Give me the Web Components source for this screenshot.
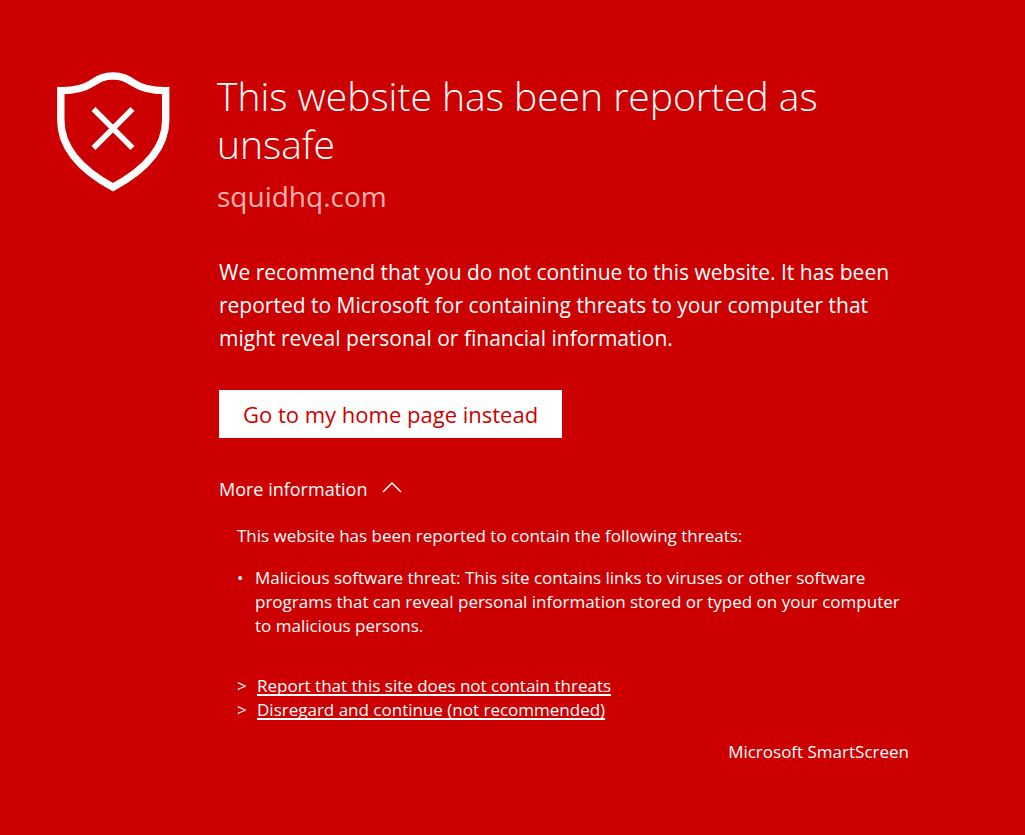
<!DOCTYPE html>
<html lang="en">
<head>
<meta charset="utf-8">
<meta name="viewport" content="width=device-width, initial-scale=1">
<title>Unsafe website</title>
<style>
  body { margin: 0; min-height: 100vh; background: #cc0000; color: #fff; font-family: "Open Sans", "Noto Sans", sans-serif; }
</style>
</head>
<body>
<warning-page>
  <shield-icon slot="icon"></shield-icon>
  <warning-heading slot="heading">This website has been reported as unsafe<span slot="site">squidhq.com</span></warning-heading>
  <span slot="advice">We recommend that you do not continue to this website. It has been reported to Microsoft for containing threats to your computer that might reveal personal or financial information.</span>
  <home-button slot="action">Go to my home page instead</home-button>
  <more-information slot="details">
    <span slot="intro">This website has been reported to contain the following threats:</span>
    <span slot="threat">Malicious software threat: This site contains links to viruses or other software programs that can reveal personal information stored or typed on your computer to malicious persons.</span>
    <action-link slot="links" href="#report">Report that this site does not contain threats</action-link>
    <action-link slot="links" href="#continue">Disregard and continue (not recommended)</action-link>
  </more-information>
  <span slot="brand">Microsoft SmartScreen</span>
</warning-page>
<script>
const define = (name, html, setup) => customElements.define(name, class extends HTMLElement {
  constructor() {
    super();
    const template = document.createElement('template');
    template.innerHTML = html;
    this.attachShadow({ mode: 'open' }).append(template.content.cloneNode(true));
    if (setup) setup(this, this.shadowRoot);
  }
});

define('warning-page', `
<style>
  :host { display: block; padding: 72px 56px; }
  main { display: grid; grid-template-columns: 114px minmax(0, 692px); column-gap: 47px; }
  .body { padding-left: 2px; }
  .advice { margin: 40px 0 35px; font-size: 21px; line-height: 33px; }
  footer { margin-top: 18px; text-align: right; font-size: 17px; line-height: 24px; }
</style>
<main>
  <slot name="icon"></slot>
  <div>
    <slot name="heading"></slot>
    <div class="body">
      <p class="advice"><slot name="advice"></slot></p>
      <slot name="action"></slot>
      <slot name="details"></slot>
      <footer><slot name="brand"></slot></footer>
    </div>
  </div>
</main>`);

define('shield-icon', `
<style>
  :host { display: block; }
  svg { display: block; width: 100%; height: auto; }
</style>
<svg viewBox="0 0 114 120" fill="none" stroke="#fff" aria-hidden="true">
  <path stroke-width="7.4" d="M4.800 18.600C17 18.800 27 17 35.500 11.500C44 6 48 4 57 4C66 4 70 6 78.500 11.500C87 17 97 18.800 109.700 18.600V48C109.700 78 87 99 57 115.200C27 99 4.800 78 4.800 48Z"/>
  <path stroke-width="5.500" d="M37.500 37L76.500 76M76.500 37L37.500 76"/>
</svg>`);

define('warning-heading', `
<style>
  :host { display: block; }
  h1 { margin: 0; font-size: 39px; font-weight: 300; line-height: 48px; }
  p { margin: 8px 0 0; font-size: 28px; line-height: 40px; color: #ffb0b0; }
</style>
<h1><slot></slot></h1>
<p><slot name="site"></slot></p>`);

define('home-button', `
<style>
  :host { display: block; }
  button { display: block; margin: 0; padding: 8px 24px; border: 0; border-radius: 0; background: #fff; color: #cc0000; font: inherit; font-size: 22px; line-height: 32px; cursor: pointer; }
</style>
<button type="button"><slot></slot></button>`);

define('more-information', `
<style>
  :host { display: block; margin-top: 36px; font-size: 17px; line-height: 24px; }
  button { display: flex; align-items: flex-start; gap: 15px; margin: 0; padding: 0; border: 0; background: none; color: inherit; font: inherit; font-size: 18px; line-height: 30px; cursor: pointer; }
  svg { width: 20px; height: 12px; padding-top: 7px; }
  .details { padding-left: 18px; }
  p { margin: 20px 0 18px; }
  ul { margin: 0 0 36px; padding: 0; list-style: none; }
  li { display: grid; grid-template-columns: 18px 1fr; }
</style>
<button type="button" aria-expanded="true" aria-controls="details">More information
  <svg viewBox="0 0 20 12" fill="none" stroke="#fff" stroke-width="1.500" aria-hidden="true"><path d="M1 11L10 2L19 11"/></svg>
</button>
<div class="details" id="details">
  <p><slot name="intro"></slot></p>
  <ul><li><span>•</span><slot name="threat"></slot></li></ul>
  <slot name="links"></slot>
</div>`, (host, root) => {
  const button = root.querySelector('button');
  const details = root.querySelector('.details');
  button.addEventListener('click', () => {
    details.hidden = !details.hidden;
    button.setAttribute('aria-expanded', String(!details.hidden));
  });
});

define('action-link', `
<style>
  :host { display: grid; grid-template-columns: 20px 1fr; line-height: 24px; }
  a { justify-self: start; color: inherit; text-decoration: underline; text-decoration-thickness: 2px; text-underline-offset: 2px; text-decoration-skip-ink: none; }
</style>
<span>&gt;</span><a><slot></slot></a>`, (host, root) => {
  root.querySelector('a').href = host.getAttribute('href') || '#';
});
</script>
</body>
</html>
